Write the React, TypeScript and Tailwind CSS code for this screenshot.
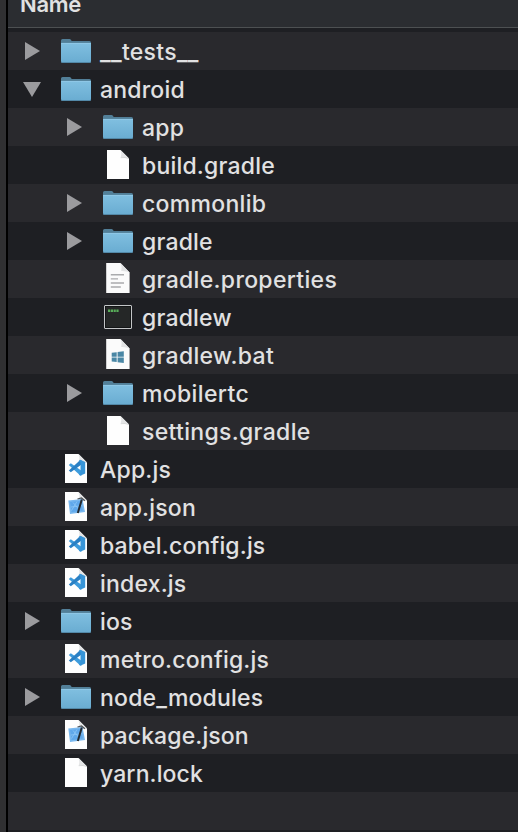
type Kind = 'folder' | 'blank' | 'text' | 'terminal' | 'windows' | 'vscode' | 'xcode';
type Entry = { name: string; kind: Kind; nested?: boolean; arrow?: 'right' | 'down'; tracking?: string };

const entries: Entry[] = [
  { name: '__tests__', kind: 'folder', arrow: 'right', tracking: 'tracking-[0.3px]' },
  { name: 'android', kind: 'folder', arrow: 'down' },
  { name: 'app', kind: 'folder', arrow: 'right', nested: true },
  { name: 'build.gradle', kind: 'blank', nested: true },
  { name: 'commonlib', kind: 'folder', arrow: 'right', nested: true, tracking: 'tracking-[0.3px]' },
  { name: 'gradle', kind: 'folder', arrow: 'right', nested: true },
  { name: 'gradle.properties', kind: 'text', nested: true, tracking: 'tracking-[0.32px]' },
  { name: 'gradlew', kind: 'terminal', nested: true },
  { name: 'gradlew.bat', kind: 'windows', nested: true, tracking: 'tracking-[0.28px]' },
  { name: 'mobilertc', kind: 'folder', arrow: 'right', nested: true, tracking: 'tracking-[0.36px]' },
  { name: 'settings.gradle', kind: 'blank', nested: true, tracking: 'tracking-[0.32px]' },
  { name: 'App.js', kind: 'vscode' },
  { name: 'app.json', kind: 'xcode' },
  { name: 'babel.config.js', kind: 'vscode', tracking: 'tracking-[0.16px]' },
  { name: 'index.js', kind: 'vscode' },
  { name: 'ios', kind: 'folder', arrow: 'right' },
  { name: 'metro.config.js', kind: 'vscode' },
  { name: 'node_modules', kind: 'folder', arrow: 'right' },
  { name: 'package.json', kind: 'xcode', tracking: 'tracking-[0.12px]' },
  { name: 'yarn.lock', kind: 'blank', tracking: 'tracking-[0.1px]' },
];

function Arrow({ dir }: { dir?: 'right' | 'down' }) {
  return (
    <svg className="h-[38px] w-5 shrink-0" viewBox="0 0 20 38" fill="#9b9b9e">
      {dir === 'right' && <path d="M3 10 L18 19 L3 28 Z" />}
      {dir === 'down' && <path d="M1 12 H19 L10 27 Z" />}
    </svg>
  );
}

function Folder() {
  return (
    <>
      <defs>
        <linearGradient id="folderFace" x1="0" y1="0" x2="0" y2="1">
          <stop offset="0" stopColor="#80bfe0" />
          <stop offset="1" stopColor="#69acd1" />
        </linearGradient>
      </defs>
      <path d="M1 29 V8.5 Q1 7 2.5 7 H9.5 Q10.5 7 11 8 L11.7 9 H29.5 Q31 9 31 10.5 V29 Z" fill="#527f98" />
      <path d="M1 11 H31 V29 Q31 31 29.5 31 H2.5 Q1 31 1 29 Z" fill="url(#folderFace)" />
      <path d="M1.3 11.4 H30.7" stroke="#94cce8" strokeWidth="0.8" />
      <path d="M1.5 30.5 H30.5" stroke="#5389a8" strokeWidth="1" />
    </>
  );
}

function Page({ large }: { large: boolean }) {
  if (large) {
    return (
      <>
        <path d="M4.2 3 H18.5 L27.6 12.5 V33 H4.2 Z" fill="#fbfbfb" />
        <path d="M18.5 3 Q20.5 7 19.2 11 Q23.5 10.6 27.6 12.5 Z" fill="#e2e3e4" />
      </>
    );
  }
  return (
    <>
      <path d="M5 4 H18.5 L27 12.5 V33 H5 Z" fill="#fefefe" />
      <path d="M18.5 4 Q20 7.5 18.7 11.6 Q23 11 27 12.5 Z" fill="#e4e5e6" />
      <path d="M18.7 11.7 Q23 10.8 27 12.7" stroke="#c8c9ca" strokeWidth="0.6" fill="none" />
    </>
  );
}

function Icon({ kind }: { kind: Kind }) {
  return (
    <svg className="h-[38px] w-8 shrink-0" viewBox="0 0 32 38">
      {kind === 'folder' && <Folder />}
      {kind === 'terminal' && (
        <>
          <rect x="2.5" y="7.5" width="27" height="23" rx="0.5" fill="#252727" stroke="#c3c5c7" />
          <rect x="3.5" y="8.5" width="25" height="21" fill="none" stroke="#101213" strokeWidth="0.8" />
          <path d="M6 12.7 H16.7" stroke="#58ac59" strokeWidth="2.4" strokeDasharray="2.2 0.6" />
        </>
      )}
      {kind !== 'folder' && kind !== 'terminal' && <Page large={kind === 'text' || kind === 'windows'} />}
      {kind === 'text' && <path d="M8.8 14.8 H22 M8.8 18.9 H16 M8.8 23 H22 M8.8 27 H18.8" stroke="#aaabad" strokeWidth="1.4" />}
      {kind === 'windows' && (
        <path
          d="M9.7 16.8 L14.7 16.2 V20.7 H9.7 Z M15.6 16.1 L21.8 15.3 V20.7 H15.6 Z M9.7 21.6 H14.7 V26.1 L9.7 25.5 Z M15.6 21.6 H21.8 V27 L15.6 26.2 Z"
          fill="#4a87a5"
        />
      )}
      {kind === 'vscode' && (
        <>
          <path d="M8.8 15 L10.8 13.2 L21.5 20.8 V25.6 L20 25.3 Z" fill="#3d9bdc" />
          <path d="M8.8 20.4 L10.8 22.2 L21.5 14.6 V10.2 L20 10.2 Z" fill="#2a80c4" />
          <path d="M20.2 9.8 L25.2 12 V23.6 L20.2 25.8 L18.8 24.6 L20.5 23 V12.4 L18.8 11 Z" fill="#3795d8" />
        </>
      )}
      {kind === 'xcode' && (
        <>
          <path d="M8.3 12.4 L22.5 11 L25 24 L10 26 Z" fill="#79b8ef" />
          <path d="M10 14 L21.3 12.8 L22.8 22.6 L11.5 24.2 Z" fill="#60a8eb" />
          <path d="M11.5 22.5 L17 13.5 M13 14.5 L20 22.5 M11 19 L22 17.7" stroke="#8dc6f6" strokeWidth="0.8" />
          <path d="M21.8 11.5 L17.8 25" stroke="#242a30" strokeWidth="2" />
          <path d="M17.5 11 L21.5 10 L24.8 12.8" stroke="#4a5056" strokeWidth="1.2" fill="none" />
        </>
      )}
    </svg>
  );
}

export default function App() {
  return (
    <div className="flex h-[832px] w-[518px] overflow-hidden bg-[#1e1f23] font-[Inter,sans-serif] text-[#e1e1e2]">
      <div className="w-2 shrink-0 border-r-2 border-black bg-[#303032]" />
      <div className="flex min-w-0 flex-1 flex-col">
        <header className="flex h-7 shrink-0 items-end border-b border-[#4d5052] bg-[#2b2d31] pl-3">
          <span className="mb-[9px] text-[22px] leading-[28px] font-semibold tracking-[-0.3px]">Name</span>
        </header>
        <div className="h-1 shrink-0" />
        <main>
          {entries.map((entry) => (
            <div
              key={entry.name}
              className={`flex h-[38px] items-center odd:bg-[#29292d] even:bg-[#1e1f23] ${entry.nested ? 'pl-14' : 'pl-3.5'}`}
            >
              <Arrow dir={entry.arrow} />
              <div className="ml-[18px] flex">
                <Icon kind={entry.kind} />
              </div>
              <span className={`ml-2 pt-0.5 text-[23px] leading-[36px] font-medium whitespace-pre ${entry.tracking ?? 'tracking-[0.2px]'}`}>
                {entry.name}
              </span>
            </div>
          ))}
          <div className="h-[38px] bg-[#29292d]" />
        </main>
      </div>
    </div>
  );
}
